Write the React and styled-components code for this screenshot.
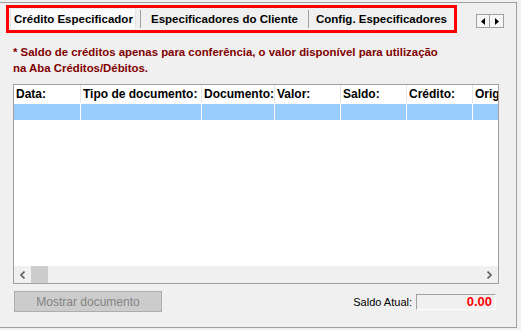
import React from "react";
import styled, { createGlobalStyle } from "styled-components";

const GlobalStyle = createGlobalStyle`
  html, body {
    margin: 0;
    padding: 0;
    background: #f0f0f0;
  }
  * {
    box-sizing: border-box;
  }
`;

const Page = styled.div`
  width: 521px;
  height: 330px;
  padding-top: 2px;
  background: #f0f0f0;
  font-family: "Liberation Sans", Arial, sans-serif;
  overflow: hidden;
`;

const Frame = styled.div`
  width: 517px;
  height: 326px;
  border-top: 1px solid #a0a0a0;
  border-right: 1px solid #a0a0a0;
  border-bottom: 1px solid #a0a0a0;
  display: flex;
  flex-direction: column;
`;

const TabRow = styled.div`
  display: flex;
  align-items: flex-start;
  margin-top: 2px;
`;

const Highlight = styled.div`
  margin-left: 6px;
  width: 451px;
  height: 28px;
  border: 3px solid #ff0000;
  display: flex;
  align-items: stretch;
`;

const Tab = styled.div`
  width: ${props => props.$width}px;
  margin: ${props => (props.$selected ? "1px 0 1px 1px" : "2px 0")};
  padding-left: ${props => (props.$selected ? "3px" : "0")};
  display: flex;
  align-items: center;
  justify-content: ${props => (props.$selected ? "flex-start" : "center")};
  background: ${props => (props.$selected ? "#fbfbfb" : "transparent")};
  border-left: 1px solid ${props => (props.$selected ? "#e3e3e3" : "#a0a0a0")};
  border-right: ${props => (props.$selected ? "1px solid #e3e3e3" : "none")};
  margin-right: ${props => props.$gap || 0}px;
  font-size: 11.5px;
  font-weight: bold;
  color: #000;
  white-space: nowrap;
`;

const ArrowGroup = styled.div`
  display: flex;
  margin-left: 19px;
  margin-top: 9px;
`;

const ArrowButton = styled.div`
  width: 14px;
  height: 14px;
  border: 1px solid #a0a0a0;
  border-left: ${props => (props.$right ? "none" : "1px solid #a0a0a0")};
  background: #f7f7f7;
  display: flex;
  align-items: center;
  justify-content: center;
`;

const Notice = styled.p`
  margin: 11px 0 0 13px;
  font-size: 11.4px;
  line-height: 16px;
  font-weight: bold;
  color: #800000;
`;

const Grid = styled.div`
  margin: 8px 0 0 13px;
  width: 486px;
  height: 200px;
  border: 1px solid #a0a0a0;
  background: #fff;
  display: flex;
  flex-direction: column;
`;

const Row = styled.div`
  display: grid;
  grid-template-columns: 67px 121px 73px 66px 66px 66px 1fr;
  height: ${props => props.$height}px;
  background: ${props => props.$bg};
  border-bottom: 1px solid ${props => props.$line};
`;

const Cell = styled.div`
  border-right: 1px solid ${props => props.$line};
  padding-left: 2px;
  display: flex;
  align-items: center;
  font-size: 12px;
  font-weight: bold;
  color: #000;
  white-space: nowrap;
  overflow: hidden;
  &:last-child {
    border-right: none;
  }
`;

const Body = styled.div`
  flex: 1;
`;

const HScroll = styled.div`
  height: 17px;
  background: #f0f0f0;
  display: flex;
  align-items: stretch;
`;

const ScrollArrow = styled.div`
  width: 17px;
  display: flex;
  align-items: center;
  justify-content: center;
`;

const Thumb = styled.div`
  width: 17px;
  background: #cdcdcd;
`;

const Track = styled.div`
  flex: 1;
`;

const Footer = styled.div`
  display: flex;
  align-items: center;
  margin-top: 7px;
  padding: 0 20px 0 14px;
`;

const Button = styled.button`
  width: 148px;
  height: 21px;
  background: #cccccc;
  border: 1px solid #adadad;
  color: #838383;
  font-family: "Liberation Sans", Arial, sans-serif;
  font-size: 12px;
  padding: 0;
`;

const Label = styled.span`
  margin-left: auto;
  font-size: 11px;
  color: #000;
`;

const ValueBox = styled.div`
  margin-left: 4px;
  width: 80px;
  height: 16px;
  border-top: 1px solid #a0a0a0;
  border-left: 1px solid #a0a0a0;
  border-right: 1px solid #fff;
  border-bottom: 1px solid #fff;
  background: #f0f0f0;
  display: flex;
  align-items: center;
  justify-content: flex-end;
  padding-right: 3px;
  font-size: 13px;
  font-weight: bold;
  color: #ff0000;
`;

const columns = ["Data:", "Tipo de documento:", "Documento:", "Valor:", "Saldo:", "Crédito:", "Orig"];

const Tri = ({ left }) => (
  <svg width="4" height="7" viewBox="0 0 4 7">
    <path d={left ? "M4 0 L0 3.5 L4 7 Z" : "M0 0 L4 3.5 L0 7 Z"} fill="#000" />
  </svg>
);

const Chevron = ({ left }) => (
  <svg width="5" height="8" viewBox="0 0 5 8">
    <path
      d={left ? "M4.5 0.5 L1 4 L4.5 7.5" : "M0.5 0.5 L4 4 L0.5 7.5"}
      stroke="#606060"
      strokeWidth="1.6"
      fill="none"
    />
  </svg>
);

const App = () => {
  return (
    <Page>
      <GlobalStyle />
      <Frame>
        <TabRow>
          <Highlight>
            <Tab $width={126} $selected $gap={4}>Crédito Especificador</Tab>
            <Tab $width={168}>Especificadores do Cliente</Tab>
            <Tab $width={146}>Config. Especificadores</Tab>
          </Highlight>
          <ArrowGroup>
            <ArrowButton><Tri left /></ArrowButton>
            <ArrowButton $right><Tri /></ArrowButton>
          </ArrowGroup>
        </TabRow>
        <Notice>
          * Saldo de créditos apenas para conferência, o valor disponível para utilização
          <br />
          na Aba Créditos/Débitos.
        </Notice>
        <Grid>
          <Row $height={19} $bg="#fff" $line="#fff">
            {columns.map(c => (
              <Cell key={c} $line="#e5e5e5">{c}</Cell>
            ))}
          </Row>
          <Row $height={17} $bg="#99ccff" $line="#fff">
            {columns.map(c => (
              <Cell key={c} $line="#fff" />
            ))}
          </Row>
          <Body />
          <HScroll>
            <ScrollArrow><Chevron left /></ScrollArrow>
            <Thumb />
            <Track />
            <ScrollArrow><Chevron /></ScrollArrow>
          </HScroll>
        </Grid>
        <Footer>
          <Button disabled>Mostrar documento</Button>
          <Label>Saldo Atual:</Label>
          <ValueBox>0.00</ValueBox>
        </Footer>
      </Frame>
    </Page>
  );
};

export default App;
